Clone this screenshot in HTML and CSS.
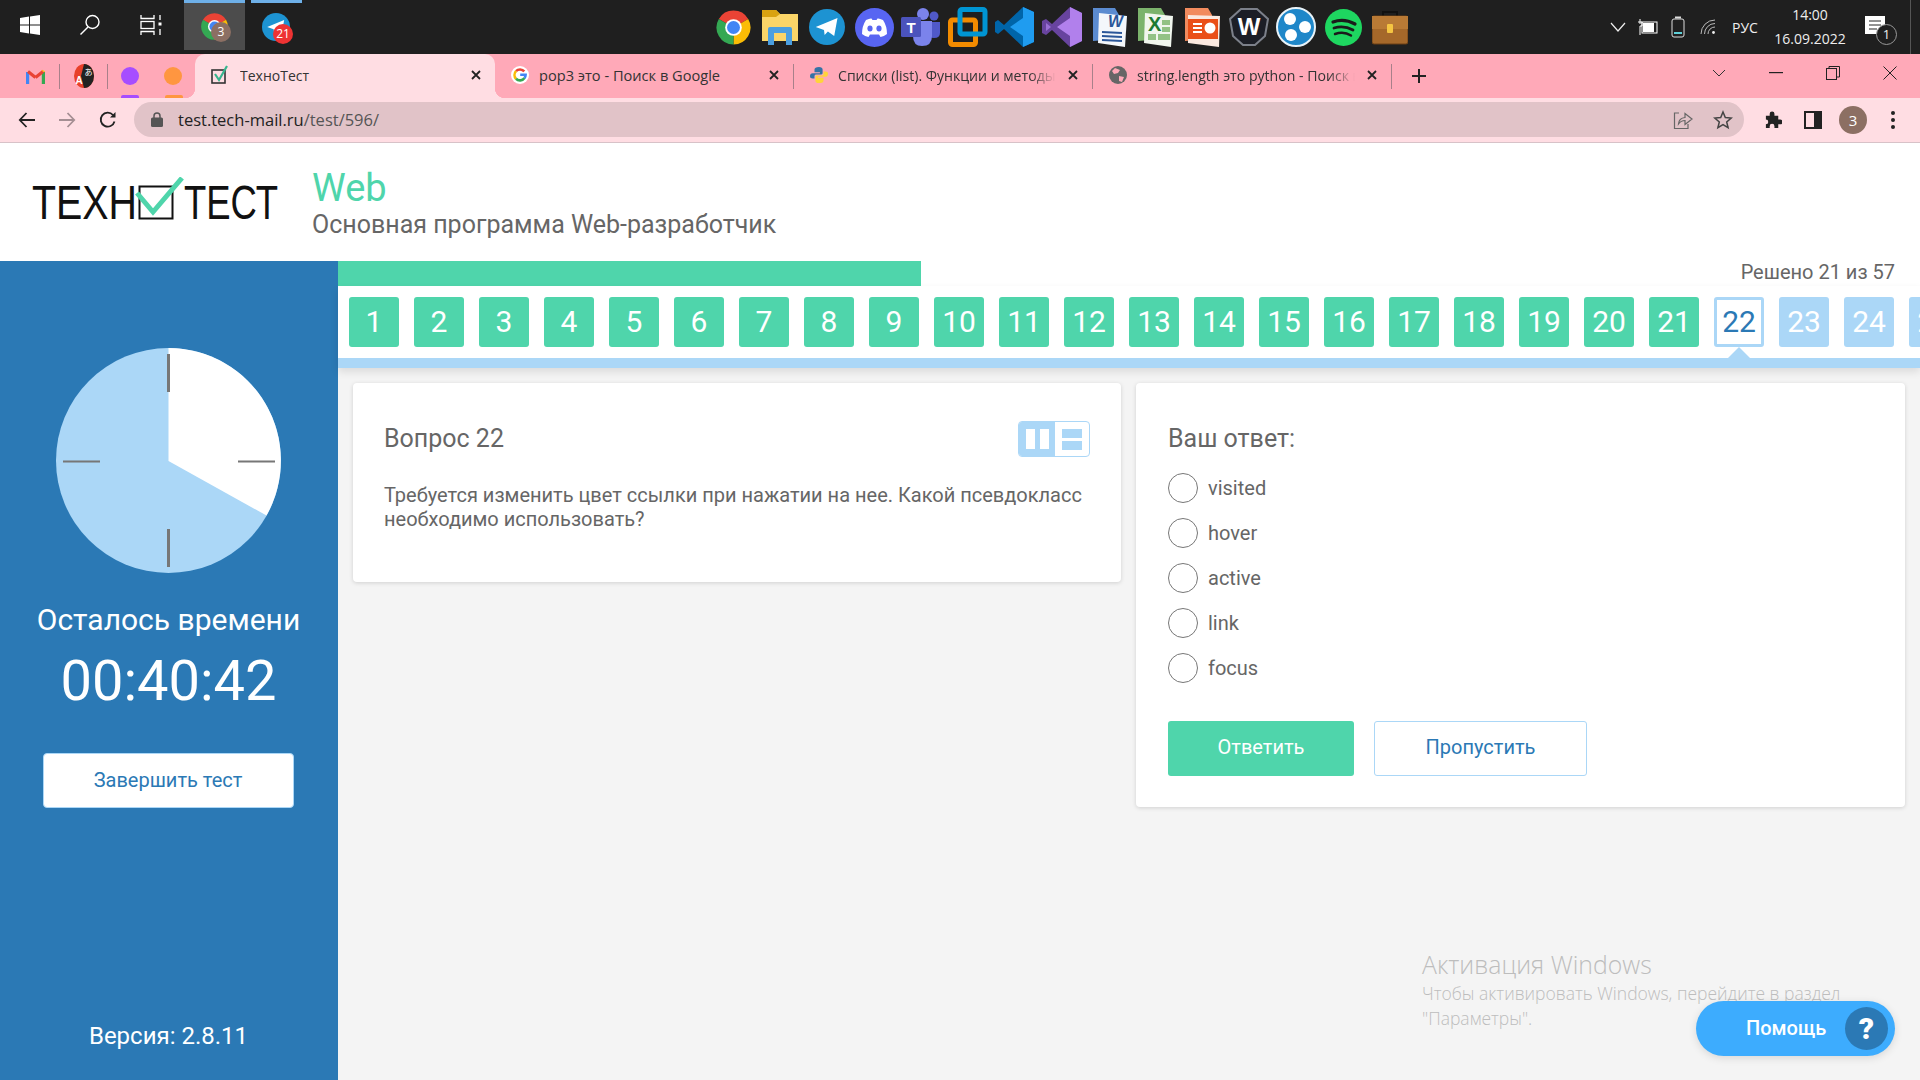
FILE: index.html
```html
<!DOCTYPE html>
<html lang="ru">
<head>
    <meta charset="UTF-8">
    <title>ТехноТест</title>
    <link rel="stylesheet" href="styles.css">
</head>
<body>
    <svg class="defs" width="0" height="0">
        <symbol id="chrome" viewBox="0 0 24 24">
            <path d="M12 12L2.47 6.5A11 11 0 0 1 21.53 6.5Z" fill="#ea4335"/>
            <path d="M12 12L21.53 6.5A11 11 0 0 1 12 23Z" fill="#fbbc05"/>
            <path d="M12 12L12 23A11 11 0 0 1 2.47 6.5Z" fill="#34a853"/>
            <circle cx="12" cy="12" r="5.4" fill="#fff"/>
            <circle cx="12" cy="12" r="4.2" fill="#4285f4"/>
        </symbol>
        <symbol id="plane" viewBox="0 0 24 24">
            <circle cx="12" cy="12" r="12" fill="#1d93d2"/>
            <path d="M4.5 12L19 6L16.8 18L12.6 15L10.4 17.4L10 14Z" fill="#fff"/>
        </symbol>
        <symbol id="close" viewBox="0 0 12 12">
            <path d="M2 2L10 10M10 2L2 10" stroke="#222" stroke-width="1.8" fill="none"/>
        </symbol>
    </svg>

    <div class="taskbar">
        <div class="task-btn task-win">
            <svg width="20" height="20" viewBox="0 0 20 20"><path d="M0 3L9 1.6V9.5H0ZM10 1.4L20 0V9.5H10ZM0 10.5H9V18.4L0 17ZM10 10.5H20V20L10 18.6Z" fill="#fff"/></svg>
        </div>
        <div class="task-btn task-search">
            <svg width="22" height="22" viewBox="0 0 22 22" fill="none" stroke="#fff" stroke-width="1.4"><circle cx="13.5" cy="8" r="6.5"/><path d="M9 13L1.5 20.5"/></svg>
        </div>
        <div class="task-btn task-view">
            <svg width="22" height="20" viewBox="0 0 22 20" fill="none" stroke="#fff" stroke-width="1.3"><path d="M1 0V3.5H14V0M1 20V16.500H14V20"/><rect x="1" y="6.500" width="13" height="7"/><path d="M20 0V5M20 14V20"/><rect x="18.500" y="7.500" width="3" height="3" fill="#fff" stroke="none"/></svg>
        </div>
        <div class="task-btn task-open task-chrome">
            <svg width="29" height="29"><use href="#chrome"/></svg>
            <span class="task-badge badge-grey">3</span>
        </div>
        <div class="task-btn task-open task-tg">
            <svg width="28" height="28"><use href="#plane"/></svg>
            <span class="task-badge badge-red">21</span>
        </div>

        <div class="apps">
            <div class="app"><svg width="37" height="37"><use href="#chrome"/></svg></div>
            <div class="app">
                <svg width="36" height="36" viewBox="0 0 36 36"><path d="M0 1H14L18 5H36V32H0Z" fill="#fbd568"/><path d="M0 1H14L18 5L14 8H0Z" fill="#d9a211"/><path d="M6 36V20Q6 18 8 18H28Q30 18 30 20V36H24V24H12V36Z" fill="#4b9fe0"/></svg>
            </div>
            <div class="app"><svg width="36" height="36"><use href="#plane"/></svg></div>
            <div class="app">
                <svg width="39" height="39" viewBox="0 0 39 39"><circle cx="19.500" cy="19.500" r="19.500" fill="#5865f2"/><path d="M11 12Q15 10 16.500 10.500L17.500 12H21.500L22.500 10.500Q24 10 28 12Q32 18 32 26Q29 28.500 25.500 29L24 26.500H15L13.500 29Q10 28.500 7 26Q7 18 11 12Z" fill="#fff"/><ellipse cx="15" cy="20.500" rx="2.600" ry="3" fill="#5865f2"/><ellipse cx="24" cy="20.500" rx="2.600" ry="3" fill="#5865f2"/></svg>
            </div>
            <div class="app">
                <svg width="40" height="38" viewBox="0 0 40 38"><circle cx="33" cy="8" r="4.500" fill="#5059c9"/><path d="M27 14H39V25Q39 30 33 30Q27 30 27 25Z" fill="#5059c9"/><circle cx="22" cy="6" r="6" fill="#7b83eb"/><path d="M12 13H31V28Q31 38 21 38Q12 38 12 28Z" fill="#7b83eb"/><rect x="0" y="9" width="20" height="20" rx="1.500" fill="#4b53bc"/><text x="10" y="24.500" class="icon-letter" font-size="15" fill="#fff" text-anchor="middle">T</text></svg>
            </div>
            <div class="app">
                <svg width="40" height="40" viewBox="0 0 40 40" fill="none"><rect x="2.500" y="13" width="25" height="24.500" rx="2" stroke="#f38b00" stroke-width="5"/><rect x="12" y="2.500" width="25" height="24.500" rx="2" stroke="#0095d3" stroke-width="5"/></svg>
            </div>
            <div class="app">
                <svg width="40" height="40" viewBox="0 0 40 40"><path d="M28 0L39 5V35L28 40L9 22L3 27L0 25V15L3 13L9 18Z" fill="#0065a9"/><path d="M28 0L39 5V35L28 40V29L15 20L28 11Z" fill="#1f9cf0"/></svg>
            </div>
            <div class="app">
                <svg width="40" height="40" viewBox="0 0 40 40"><path d="M28 0L40 6V34L28 40L10 23L4 28L0 26V14L4 12L10 17Z" fill="#68449f"/><path d="M28 0L40 6V34L28 40V29L15 20L28 11Z" fill="#b180ec"/><path d="M4 16V24L9 20Z" fill="#9a6fd6"/></svg>
            </div>
            <div class="app">
                <svg width="40" height="40" viewBox="0 0 40 40"><path d="M4 1H26L30 8V32L4 34Z" fill="#5b8bd0"/><path d="M10 6L38 9L36 40L9 36Z" fill="#f4f7fb"/><text x="19" y="20" class="icon-letter" font-size="16" font-style="italic" fill="#2a5699">W</text><path d="M13 25L33 26M13 29L33 30M13 33L33 34" stroke="#2a5699" stroke-width="2"/></svg>
            </div>
            <div class="app">
                <svg width="40" height="40" viewBox="0 0 40 40"><path d="M3 1H26L30 8V32L3 34Z" fill="#7cb36c"/><path d="M10 6L38 9L36 40L9 36Z" fill="#f1f6ee"/><text x="13" y="24" class="icon-letter" font-size="20" fill="#1c7a32">X</text><path d="M27 13H35V18H27ZM27 20H35V25H27ZM13 27H21V33H13ZM23 27H35V33H23Z" fill="#93c285"/></svg>
            </div>
            <div class="app">
                <svg width="40" height="40" viewBox="0 0 40 40"><path d="M3 1H26L30 8V32L3 34Z" fill="#f28b5e"/><path d="M6 8L38 9L37 40L6 36Z" fill="#fbe9e0"/><rect x="6" y="12" width="30" height="20" fill="#ea4f18"/><circle cx="28" cy="21" r="5.500" fill="#fff"/><path d="M11 17H20M11 21H20M11 25H20" stroke="#fff" stroke-width="2"/></svg>
            </div>
            <div class="app">
                <svg width="40" height="38" viewBox="0 0 40 38"><path d="M12 1H28L39 11L36 28L26 37H14L4 28L1 11Z" fill="#1c1e26" stroke="#7c808a" stroke-width="2"/><text x="20" y="27" class="icon-letter" font-size="24" fill="#fff" text-anchor="middle">W</text></svg>
            </div>
            <div class="app">
                <svg width="40" height="40" viewBox="0 0 40 40"><circle cx="20" cy="20" r="19" fill="#1f87c9" stroke="#e8f2f8" stroke-width="2"/><circle cx="14" cy="12" r="6" fill="#fff"/><circle cx="29" cy="20" r="6" fill="#fff"/><circle cx="15" cy="28" r="6" fill="#fff"/></svg>
            </div>
            <div class="app">
                <svg width="37" height="37" viewBox="0 0 37 37" fill="none"><circle cx="18.500" cy="18.500" r="18.500" fill="#1ed760"/><path d="M8 13Q19 9 30 15" stroke="#1b1b1b" stroke-width="3.200" stroke-linecap="round"/><path d="M9 19Q19 16 28 21" stroke="#1b1b1b" stroke-width="2.800" stroke-linecap="round"/><path d="M10 25Q19 22 26 26.500" stroke="#1b1b1b" stroke-width="2.400" stroke-linecap="round"/></svg>
            </div>
            <div class="app">
                <svg width="36" height="36" viewBox="0 0 36 36"><path d="M11 8V3H25V8" stroke="#111" stroke-width="2" fill="none"/><rect x="0" y="7" width="36" height="28" rx="2" fill="#a5682a" stroke="#6b3f14"/><rect x="0" y="7" width="36" height="13" fill="#b97a35"/><rect x="15" y="15" width="6" height="9" rx="1" fill="#f5c542"/></svg>
            </div>
        </div>

        <div class="tray">
            <div class="tray-item tray-md">
                <svg width="16" height="10" viewBox="0 0 16 10" fill="none" stroke="#eee" stroke-width="1.200"><path d="M1 1L8 9L15 1"/></svg>
            </div>
            <div class="tray-item tray-md">
                <svg width="20" height="16" viewBox="0 0 20 16"><path d="M2 0V5M0 3H4V7H2V16" stroke="#fff" stroke-width="1" fill="none"/><rect x="4" y="3" width="15" height="11" fill="none" stroke="#fff"/><rect x="5" y="4" width="11" height="9" fill="#fff"/></svg>
            </div>
            <div class="tray-item tray-md">
                <svg width="14" height="22" viewBox="0 0 14 22"><rect x="1" y="3" width="12" height="18" rx="2" fill="none" stroke="#ddd"/><rect x="4" y="0.500" width="6" height="2" fill="#ddd"/><path d="M3 16H11V18H3Z" fill="#5fd0d8"/></svg>
            </div>
            <div class="tray-item tray-md">
                <svg width="16" height="16" viewBox="0 0 16 16" fill="none" stroke="#bbb"><path d="M1 15A14 14 0 0 1 15 1M4.500 15A10.500 10.500 0 0 1 15 4.500M8 15A7 7 0 0 1 15 8"/><circle cx="13.500" cy="13.500" r="1.400" fill="#eee" stroke="none"/></svg>
            </div>
            <div class="tray-item tray-lang">РУС</div>
            <div class="tray-clock">
                <span>14:00</span>
                <span>16.09.2022</span>
            </div>
            <div class="tray-item tray-notify">
                <svg width="22" height="24" viewBox="0 0 22 24"><path d="M0 1H20V19H0Z" fill="#fff"/><path d="M4 6H16M4 10H16M4 14H12" stroke="#222"/></svg>
                <span class="notify-count">1</span>
            </div>
            <div class="tray-line"></div>
        </div>
    </div>

    <div class="tabstrip">
        <div class="pinned pin-gmail">
            <svg width="19" height="15" viewBox="0 0 19 15" fill="none" stroke-width="3.200"><path d="M1.600 15V3" stroke="#4285f4"/><path d="M17.400 15V3" stroke="#34a853"/><path d="M2 2.500L9.500 8.500" stroke="#ea4335"/><path d="M9.500 8.500L17 2.500" stroke="#ea4335"/><path d="M17 2.500L17.500 1.500" stroke="#fbbc05"/></svg>
        </div>
        <div class="pinned pin-translate">
            <svg width="20" height="24" viewBox="0 0 20 24"><ellipse cx="10" cy="12" rx="10" ry="12" fill="#e8402a"/><path d="M10 0A10 12 0 0 1 10 24L7 12Z" fill="#222"/><text x="1.500" y="20" class="icon-letter" font-size="10" fill="#fff">A</text><text x="10.500" y="11" class="icon-cjk" font-size="8" fill="#fff">あ</text></svg>
        </div>
        <div class="pinned pin-group pin-purple"><span class="pin-dot"></span></div>
        <div class="pinned pin-group pin-orange"><span class="pin-dot"></span></div>

        <div class="tab tab-active">
            <span class="tab-icon">
                <svg width="18" height="20" viewBox="0 0 18 20" fill="none"><rect x="1" y="5" width="13" height="13" stroke="#333" stroke-width="1.600"/><path d="M4 9L8 15L16 1" stroke="#36b58e" stroke-width="2.200"/></svg>
            </span>
            <span class="tab-title">ТехноТест</span>
            <svg class="tab-close" width="12" height="12"><use href="#close"/></svg>
        </div>
        <div class="tab">
            <span class="tab-icon">
                <svg width="18" height="18" viewBox="0 0 18 18" fill="none" stroke-width="2.600"><circle cx="9" cy="9" r="9" fill="#fff" stroke="none"/><path d="M13.300 5.400A5.600 5.600 0 0 0 5 5.200" stroke="#ea4335"/><path d="M5 5.200A5.600 5.600 0 0 0 5 12.800" stroke="#fbbc05"/><path d="M5 12.800A5.600 5.600 0 0 0 13.500 12" stroke="#34a853"/><path d="M13.500 12Q14.600 10.800 14.600 8.800H9.200" stroke="#4285f4"/></svg>
            </span>
            <span class="tab-title">pop3 это - Поиск в Google</span>
            <svg class="tab-close" width="12" height="12"><use href="#close"/></svg>
        </div>
        <i class="tab-sep"></i>
        <div class="tab">
            <span class="tab-icon">
                <svg width="20" height="20" viewBox="0 0 20 20"><path d="M10 1Q5 1 5 4V7H11V8H3Q0 8 0 11.500Q0 14 3 14H5V11Q5 9.500 7 9.500H12Q14 9.500 14 8V4Q14 1 10 1Z" fill="#3572a5"/><path d="M10 19Q15 19 15 16V13H9V12H17Q20 12 20 8.500Q20 6 17 6H15V9Q15 10.500 13 10.500H8Q6 10.500 6 12V16Q6 19 10 19Z" fill="#ffd43b"/></svg>
            </span>
            <span class="tab-title tab-fade">Списки (list). Функции и методы списков</span>
            <svg class="tab-close" width="12" height="12"><use href="#close"/></svg>
        </div>
        <i class="tab-sep"></i>
        <div class="tab">
            <span class="tab-icon">
                <svg width="18" height="18" viewBox="0 0 18 18"><circle cx="9" cy="9" r="9" fill="#666"/><path d="M6 2L11 4L9 7L5 8L3 5ZM10 10L15 11L13 16L10 15Z" fill="#ffa9b8"/></svg>
            </span>
            <span class="tab-title tab-fade">string.length это python - Поиск в Google</span>
            <svg class="tab-close" width="12" height="12"><use href="#close"/></svg>
        </div>
        <i class="tab-sep"></i>
        <div class="tab-new">
            <svg width="16" height="16" viewBox="0 0 16 16"><path d="M8 1V15M1 8H15" stroke="#222" stroke-width="2"/></svg>
        </div>
        <div class="win-btns">
            <div class="win-btn"><svg width="14" height="8" viewBox="0 0 14 8" fill="none" stroke="#333"><path d="M1 1L7 7L13 1"/></svg></div>
            <div class="win-btn"><svg width="14" height="2"><rect width="14" height="1.200" fill="#222"/></svg></div>
            <div class="win-btn"><svg width="14" height="14" viewBox="0 0 14 14" fill="none" stroke="#222"><rect x="0.500" y="2.500" width="10" height="11"/><path d="M3 2.500V0.500H13.500V11H10.500"/></svg></div>
            <div class="win-btn"><svg width="14" height="14" viewBox="0 0 14 14" fill="none" stroke="#222"><path d="M0.500 0.500L13.500 13.500M13.500 0.500L0.500 13.500"/></svg></div>
        </div>
    </div>

    <div class="toolbar">
        <div class="tool-btn"><svg width="18" height="16" viewBox="0 0 18 16" fill="none" stroke="#222" stroke-width="1.800"><path d="M17 8H2M8.500 1L1.800 8L8.500 15"/></svg></div>
        <div class="tool-btn"><svg width="18" height="16" viewBox="0 0 18 16" fill="none" stroke="#a58e93" stroke-width="1.800"><path d="M1 8H16M9.500 1L16.200 8L9.500 15"/></svg></div>
        <div class="tool-btn tool-reload"><svg width="18" height="18" viewBox="0 0 18 18" fill="none" stroke="#222" stroke-width="1.800"><path d="M15.500 10.500A7 7 0 1 1 14 4"/><path d="M16.500 1V6.500H11" fill="#222" stroke="none"/></svg></div>
        <div class="urlbar">
            <svg class="url-lock" width="12" height="15" viewBox="0 0 12 15"><path d="M3 6V4A3 3 0 0 1 9 4V6" fill="none" stroke="#555" stroke-width="1.500"/><rect y="5.500" width="12" height="9.500" rx="1.500" fill="#555"/></svg>
            <span class="url-text"><b>test.tech-mail.ru</b>/test/596/</span>
            <div class="url-actions">
                <svg width="20" height="20" viewBox="0 0 20 20" fill="none" stroke="#666" stroke-width="1.200"><path d="M6 3H1.500V18.500H15V14"/><path d="M5.500 14Q6 8 12 7.500V3.500L19 9L12 14.500V10.500Q8 10.500 5.500 14Z"/></svg>
                <svg width="20" height="20" viewBox="0 0 20 20" fill="none" stroke="#444" stroke-width="1.500"><path d="M10 2L12.300 7.500L18.200 8L13.700 11.900L15.100 17.700L10 14.600L4.900 17.700L6.300 11.900L1.800 8L7.700 7.500Z"/></svg>
            </div>
        </div>
        <div class="tool-btn"><svg width="18" height="18" viewBox="0 0 18 18"><path d="M2 5H6V3A2.500 2.500 0 0 1 11 3V5H15V9H17A2.500 2.500 0 0 1 17 14H15V18H11V16A2.500 2.500 0 0 0 6 16V18H2V14A2.500 2.500 0 0 0 2 9Z" fill="#222" transform="scale(.95)"/></svg></div>
        <div class="tool-btn"><svg width="18" height="18" viewBox="0 0 18 18"><path d="M0 0H18V18H0ZM2 2V16H10V2Z" fill="#222" fill-rule="evenodd"/></svg></div>
        <div class="tool-btn"><span class="avatar">3</span></div>
        <div class="tool-btn tool-kebab"><svg width="4" height="18" viewBox="0 0 4 18" fill="#222"><circle cx="2" cy="2" r="2"/><circle cx="2" cy="9" r="2"/><circle cx="2" cy="16" r="2"/></svg></div>
    </div>

    <header class="site-head">
        <svg class="logo" width="246" height="44" viewBox="0 0 246 44">
            <text x="0" y="42" textLength="105" lengthAdjust="spacingAndGlyphs">ТЕХН</text>
            <rect x="107.500" y="9.500" width="33" height="32" fill="none" stroke="#111" stroke-width="2"/>
            <path d="M105 16L121 35L150 1" fill="none" stroke="#4fd5ab" stroke-width="5"/>
            <text x="152" y="42" textLength="94" lengthAdjust="spacingAndGlyphs">ТЕСТ</text>
        </svg>
        <div class="head-titles">
            <div class="head-web">Web</div>
            <div class="head-sub">Основная программа Web-разработчик</div>
        </div>
    </header>

    <div class="main">
        <aside class="sidebar">
            <svg class="clock" width="225" height="225" viewBox="0 0 225 225">
                <circle cx="112.500" cy="112.500" r="112.500" fill="#abd7f7"/>
                <path d="M112.500 0A112.500 112.500 0 0 1 210.500 167.500L112.500 113Z" fill="#fff"/>
                <path d="M112.500 6V44M112.500 181V219" stroke="#777" stroke-width="3"/>
                <path d="M7 113.500H44M182 113.500H219" stroke="#777" stroke-width="2"/>
            </svg>
            <div class="left-label">Осталось времени</div>
            <div class="left-timer">00:40:42</div>
            <button class="finish-btn">Завершить тест</button>
            <div class="version">Версия: 2.8.11</div>
        </aside>

        <section class="content">
            <div class="progress">
                <div class="progress-fill" style="width: 36.84%"></div>
                <div class="progress-label">Решено 21 из 57</div>
            </div>
            <nav class="numbers">
                <a class="num done">1</a>
                <a class="num done">2</a>
                <a class="num done">3</a>
                <a class="num done">4</a>
                <a class="num done">5</a>
                <a class="num done">6</a>
                <a class="num done">7</a>
                <a class="num done">8</a>
                <a class="num done">9</a>
                <a class="num done">10</a>
                <a class="num done">11</a>
                <a class="num done">12</a>
                <a class="num done">13</a>
                <a class="num done">14</a>
                <a class="num done">15</a>
                <a class="num done">16</a>
                <a class="num done">17</a>
                <a class="num done">18</a>
                <a class="num done">19</a>
                <a class="num done">20</a>
                <a class="num done">21</a>
                <a class="num current">22</a>
                <a class="num">23</a>
                <a class="num">24</a>
                <a class="num">25</a>
            </nav>

            <div class="cards">
                <div class="card card-question">
                    <div class="card-head">
                        <h2 class="card-title">Вопрос 22</h2>
                        <div class="view-toggle">
                            <span class="view-cols"><i></i><i></i></span>
                            <span class="view-rows"><i></i><i></i></span>
                        </div>
                    </div>
                    <p class="question-text">Требуется изменить цвет ссылки при нажатии на нее. Какой псевдокласс необходимо использовать?</p>
                </div>
                <form class="card card-answer">
                    <h2 class="card-title">Ваш ответ:</h2>
                    <div class="options">
                        <label class="option"><input type="radio" name="answer"> visited</label>
                        <label class="option"><input type="radio" name="answer"> hover</label>
                        <label class="option"><input type="radio" name="answer"> active</label>
                        <label class="option"><input type="radio" name="answer"> link</label>
                        <label class="option"><input type="radio" name="answer"> focus</label>
                    </div>
                    <div class="answer-btns">
                        <button type="button" class="btn btn-answer">Ответить</button>
                        <button type="button" class="btn btn-skip">Пропустить</button>
                    </div>
                </form>
            </div>

            <div class="watermark">
                <div class="watermark-title">Активация Windows</div>
                <div class="watermark-text">Чтобы активировать Windows, перейдите в раздел<br>"Параметры".</div>
            </div>
            <div class="help">
                <span>Помощь</span>
                <span class="help-icon">?</span>
            </div>
        </section>
    </div>
</body>
</html>
```

FILE: styles.css
```css
* {
    box-sizing: border-box;
}
html, body {
    height: 100%;
}
body {
    margin: 0;
    font-family: Roboto, "Liberation Sans", sans-serif;
    color: #666;
    background: #f4f4f4;
    display: flex;
    flex-direction: column;
    overflow: hidden;
}
.defs {
    position: absolute;
}
.icon-letter {
    font-family: "Liberation Sans", sans-serif;
    font-weight: 700;
}
.icon-cjk {
    font-family: "Noto Sans CJK JP", sans-serif;
}

/* windows taskbar */
.taskbar {
    height: 54px;
    flex: none;
    display: flex;
    background: #1f1f1f;
    color: #eee;
    font-family: "Open Sans", sans-serif;
}
.task-btn {
    height: 50px;
    display: flex;
    align-items: center;
    justify-content: center;
    position: relative;
}
.task-win {
    width: 58px;
    padding-left: 2px;
}
.task-search {
    width: 64px;
}
.task-view {
    width: 62px;
    padding-right: 4px;
}
.task-open {
    border-top: 3px solid #6eb0e8;
}
.task-chrome {
    width: 61px;
    background: #4c4c4c;
}
.task-tg {
    width: 51px;
    margin-left: 6px;
    padding-right: 2px;
}
.task-badge {
    position: absolute;
    width: 20px;
    height: 20px;
    border-radius: 50%;
    color: #fff;
    font-size: 12px;
    line-height: 20px;
    text-align: center;
}
.badge-grey {
    background: #8c6f63;
    left: 27px;
    top: 19px;
}
.badge-red {
    background: #ee3333;
    left: 22px;
    top: 21px;
}
.apps {
    display: flex;
    align-items: center;
    height: 54px;
    margin-left: 408px;
}
.app {
    width: 46.9px;
    display: flex;
    justify-content: center;
}
.tray {
    margin-left: auto;
    display: flex;
    align-items: center;
    width: 317px;
}
.tray-item {
    display: flex;
    align-items: center;
    justify-content: center;
}
.tray-md {
    width: 30px;
}
.tray-lang {
    width: 44px;
    font-size: 14px;
}
.tray-clock {
    width: 80px;
    margin-left: 3px;
    display: flex;
    flex-direction: column;
    align-items: center;
    font-size: 14px;
    line-height: 24px;
}
.tray-notify {
    width: 40px;
    margin-left: 6px;
    position: relative;
}
.notify-count {
    position: absolute;
    left: 20px;
    top: 9px;
    width: 21px;
    height: 21px;
    border-radius: 50%;
    border: 1px solid #999;
    background: #1f1f1f;
    font-size: 13px;
    line-height: 19px;
    text-align: center;
}
.tray-line {
    width: 1px;
    height: 54px;
    margin-left: 14px;
    background: #555;
}

/* browser tabs */
.tabstrip {
    height: 44px;
    flex: none;
    display: flex;
    align-items: center;
    padding-left: 13px;
    background: #ffa9b8;
    font-family: "Open Sans", sans-serif;
    font-size: 14.6px;
    color: #333;
}
.pinned {
    height: 44px;
    display: flex;
    align-items: center;
    justify-content: center;
    position: relative;
}
.pin-gmail {
    width: 47px;
    padding-right: 2px;
}
.pin-translate {
    width: 48px;
}
.pin-gmail::after,
.pin-translate::after {
    content: "";
    position: absolute;
    right: 0;
    top: 10px;
    height: 25px;
    width: 1px;
    background: #a8808a;
}
.pin-group {
    width: 43.5px;
}
.pin-dot {
    width: 18px;
    height: 18px;
    border-radius: 50%;
    background: currentColor;
}
.pin-group::after {
    content: "";
    position: absolute;
    bottom: 0;
    left: 13px;
    width: 18px;
    height: 3px;
    border-radius: 2px 2px 0 0;
    background: currentColor;
}
.pin-purple {
    color: #a64dff;
}
.pin-orange {
    color: #ff9640;
}
.tab {
    width: 298px;
    height: 44px;
    display: flex;
    align-items: center;
    padding: 0 13px 2px 16px;
    position: relative;
}
.tab-active {
    width: 300px;
    background: #ffdde3;
    border-radius: 10px 10px 0 0;
}
.tab-active::before,
.tab-active::after {
    content: "";
    position: absolute;
    bottom: 0;
    width: 10px;
    height: 10px;
}
.tab-active::before {
    left: -10px;
    background: radial-gradient(circle at 0 0, transparent 10px, #ffdde3 10.5px);
}
.tab-active::after {
    right: -10px;
    background: radial-gradient(circle at 100% 0, transparent 10px, #ffdde3 10.5px);
}
.tab-icon {
    width: 18px;
    margin-right: 10px;
    display: flex;
    justify-content: center;
}
.tab-active .tab-icon {
    margin-right: 11px;
}
.tab-active .tab-title {
    font-size: 14px;
}
.tab-title {
    flex: 1;
    white-space: nowrap;
    overflow: hidden;
}
.tab-fade {
    font-size: 14.1px;
    -webkit-mask-image: linear-gradient(to right, #000 88%, transparent);
    mask-image: linear-gradient(to right, #000 88%, transparent);
}
.tab-close {
    margin-left: 11px;
}
.tab-sep {
    width: 1px;
    height: 25px;
    background: #a8808a;
}
.tab-new {
    width: 53px;
    display: flex;
    justify-content: center;
}
.win-btns {
    margin-left: auto;
    display: flex;
    align-self: flex-start;
    height: 38px;
    padding-right: 2px;
}
.win-btn {
    width: 57px;
    display: flex;
    align-items: center;
    justify-content: center;
}

/* address bar */
.toolbar {
    height: 45px;
    flex: none;
    display: flex;
    align-items: center;
    padding: 0 8px 1px 7px;
    background: #ffdde3;
    border-bottom: 1px solid #d8c2c8;
    font-family: "Open Sans", sans-serif;
}
.tool-btn {
    width: 40px;
    display: flex;
    justify-content: center;
}
.tool-reload {
    padding-left: 2px;
    margin-right: 7px;
}
.tool-kebab {
    width: 39px;
}
.avatar {
    width: 28px;
    height: 28px;
    border-radius: 50%;
    background: #8c6f63;
    color: #fff;
    font-size: 15px;
    line-height: 28px;
    text-align: center;
}
.urlbar {
    flex: 1;
    height: 35px;
    margin-right: 9px;
    display: flex;
    align-items: center;
    padding: 0 11px 0 17px;
    border-radius: 18px;
    background: #e1c3c8;
}
.url-text {
    margin-left: 15px;
    font-size: 16.5px;
    color: #555;
}
.url-text b {
    font-weight: 400;
    color: #222;
}
.url-actions {
    margin-left: auto;
    display: flex;
    gap: 20px;
}

/* page head */
.site-head {
    height: 118px;
    flex: none;
    display: flex;
    align-items: flex-start;
    padding-left: 32px;
    background: #fff;
}
.logo {
    margin-top: 34px;
    flex: none;
    font-family: "Liberation Sans", sans-serif;
    font-size: 48px;
    fill: #111;
}
.head-titles {
    margin: 23px 0 0 34px;
}
.head-web {
    font-size: 38px;
    line-height: 44px;
    color: #4fd5ab;
}
.head-sub {
    font-size: 25px;
    line-height: 30px;
}

.main {
    flex: 1;
    display: flex;
    min-height: 0;
}

/* left column */
.sidebar {
    width: 338px;
    flex: none;
    display: flex;
    flex-direction: column;
    align-items: center;
    padding: 87px 1px 29px 0;
    background: #2b79b5;
    color: #fff;
}
.clock {
    margin-right: 1px;
}
.left-label {
    margin-top: 29px;
    font-size: 30px;
    line-height: 36px;
}
.left-timer {
    margin-top: 10px;
    font-size: 56px;
    line-height: 66px;
}
.finish-btn {
    width: 251px;
    height: 55px;
    margin: 39px 1px 0 0;
    padding-bottom: 3px;
    border: 1px solid #abd7f7;
    border-radius: 4px;
    background: #fff;
    color: #2b79b5;
    font-family: inherit;
    font-size: 20px;
}
.version {
    margin-top: auto;
    font-size: 24px;
    line-height: 30px;
}

/* test area */
.content {
    flex: 1;
    min-width: 0;
    position: relative;
}
.progress {
    height: 25px;
    display: flex;
    background: #fff;
}
.progress-fill {
    background: #4fd5ab;
}
.progress-label {
    margin-left: auto;
    padding-right: 25px;
    font-size: 20px;
    line-height: 22px;
}
.numbers {
    height: 82px;
    display: flex;
    gap: 15px;
    padding: 11px 0 0 11px;
    background: #fff;
    border-bottom: 10px solid #abd7f7;
    box-shadow: 0 4px 8px rgba(0, 0, 0, .1);
    overflow: hidden;
    position: relative;
}
.num {
    width: 50px;
    height: 50px;
    flex: none;
    border-radius: 3px;
    background: #abd7f7;
    color: #fff;
    font-size: 30px;
    line-height: 50px;
    text-align: center;
    position: relative;
}
.num.done {
    background: #4fd5ab;
}
.num.current {
    background: #fff;
    border: 3px solid #abd7f7;
    color: #2b79b5;
    line-height: 44px;
}
.num.current::after {
    content: "";
    position: absolute;
    left: 11px;
    bottom: -14px;
    border: 11px solid transparent;
    border-top: 0;
    border-bottom-color: #abd7f7;
}
.cards {
    display: grid;
    grid-template-columns: 768px 1fr;
    gap: 15px;
    align-items: start;
    padding: 15px 15px 0;
}
.card {
    padding: 38px 31px 31px;
    border-radius: 4px;
    background: #fff;
    box-shadow: 0 1px 4px rgba(0, 0, 0, .15);
}
.card-question {
    height: 199px;
}
.card-answer {
    padding-left: 32px;
}
.card-head {
    display: flex;
    justify-content: space-between;
}
.card-title {
    margin: 0;
    font-size: 25px;
    font-weight: 400;
    line-height: 36px;
}
.view-toggle {
    width: 72px;
    height: 36px;
    display: flex;
    border: 1px solid #abd7f7;
    border-radius: 4px;
    overflow: hidden;
}
.view-cols {
    width: 36px;
    display: flex;
    justify-content: center;
    align-items: center;
    gap: 5px;
    background: #abd7f7;
}
.view-cols i {
    width: 9px;
    height: 20px;
    background: #fff;
}
.view-rows {
    flex: 1;
    display: flex;
    flex-direction: column;
    justify-content: center;
    align-items: center;
    gap: 3px;
}
.view-rows i {
    width: 20px;
    height: 9px;
    background: #abd7f7;
}
.question-text {
    margin: 26px 0 0;
    font-size: 20px;
    line-height: 24px;
}
.options {
    margin-top: 16px;
    display: flex;
    flex-direction: column;
    gap: 15px;
}
.option {
    display: flex;
    align-items: center;
    gap: 10px;
    height: 30px;
    font-size: 20px;
}
.option input {
    appearance: none;
    width: 30px;
    height: 30px;
    margin: 0;
    border: 1px solid #777;
    border-radius: 50%;
    background: #fff;
}
.answer-btns {
    margin-top: 38px;
    display: flex;
    gap: 20px;
}
.btn {
    height: 55px;
    padding-bottom: 4px;
    border-radius: 3px;
    font-family: inherit;
    font-size: 20px;
}
.btn-answer {
    width: 186px;
    border: 0;
    background: #4fd5ab;
    color: #fff;
}
.btn-skip {
    width: 213px;
    border: 1px solid #abd7f7;
    background: #fff;
    color: #2b79b5;
}
.watermark {
    position: absolute;
    left: 1084px;
    top: 686px;
    font-family: "Open Sans", sans-serif;
    font-weight: 300;
    color: #bdbdbd;
}
.watermark-title {
    font-size: 24.8px;
    line-height: 34px;
}
.watermark-text {
    font-size: 17.5px;
    line-height: 25px;
}
.help {
    position: absolute;
    right: 25px;
    bottom: 24px;
    width: 199px;
    height: 55px;
    display: flex;
    align-items: center;
    padding: 0 0 2px 50px;
    border-radius: 28px;
    background: #3dacfe;
    box-shadow: 0 2px 8px rgba(0, 0, 0, .12);
    color: #fff;
    font-size: 20px;
    font-weight: 500;
}
.help-icon {
    position: absolute;
    right: 7px;
    top: 6px;
    width: 43px;
    height: 43px;
    border-radius: 50%;
    background: #2b79b5;
    font-size: 30px;
    font-weight: 900;
    line-height: 43px;
    text-align: center;
}
```
